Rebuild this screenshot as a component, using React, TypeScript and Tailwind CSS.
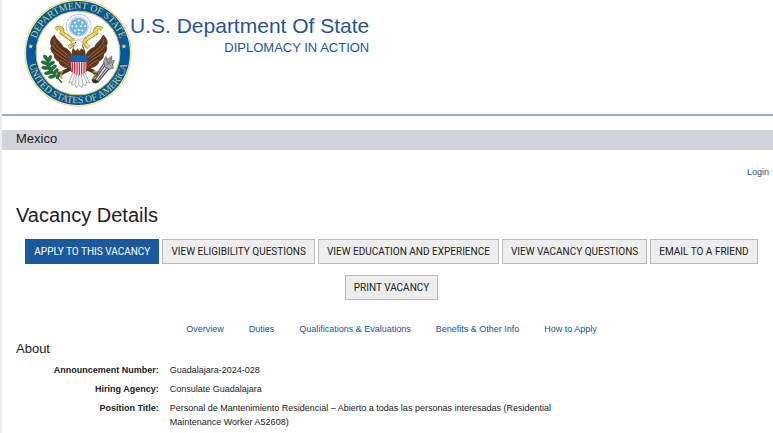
const actions = [
  { label: 'APPLY TO THIS VACANCY', primary: true },
  { label: 'VIEW ELIGIBILITY QUESTIONS' },
  { label: 'VIEW EDUCATION AND EXPERIENCE' },
  { label: 'VIEW VACANCY QUESTIONS' },
  { label: 'EMAIL TO A FRIEND' },
  { label: 'PRINT VACANCY' },
];

const sections = [
  { label: 'Overview', href: '#overview' },
  { label: 'Duties', href: '#duties' },
  { label: 'Qualifications & Evaluations', href: '#qualifications' },
  { label: 'Benefits & Other Info', href: '#benefits' },
  { label: 'How to Apply', href: '#apply' },
];

const details = [
  { term: 'Announcement Number:', value: 'Guadalajara-2024-028' },
  { term: 'Hiring Agency:', value: 'Consulate Guadalajara' },
  {
    term: 'Position Title:',
    value:
      'Personal de Mantenimiento Residencial – Abierto a todas las personas interesadas (Residential Maintenance Worker A52608)',
  },
];

// One wing, drawn on the left and mirrored for the right
const Wing = () => (
  <g>
    <path
      d="M164 106 C153 116 150 128 155 138 C151 149 157 158 163 162 C162 174 170 181 177 183 C179 195 190 201 199 202 L216 214 L217 168 C210 152 201 145 190 142 C184 126 171 124 164 106 Z"
      fill="#65391f"
      stroke="#3d2417"
      strokeWidth="2"
    />
    <path
      d="M162 117 C164 140 184 145 211 174 M158 135 C168 154 190 161 212 185 M164 156 C179 170 196 174 214 197 M180 180 C192 184 204 193 214 205"
      fill="none"
      stroke="#a77a4d"
      strokeWidth="2"
    />
    <path
      d="M168 126 C176 138 190 148 204 158 M160 148 C172 161 190 171 209 181 M172 170 C184 177 198 184 211 194"
      fill="none"
      stroke="#321d13"
      strokeWidth="2"
    />
  </g>
);

const Scroll = () => (
  <g>
    <path
      d="M168 88 C180 79 191 89 186 99 C197 107 208 113 217 121 C224 127 216 136 207 143"
      fill="none"
      stroke="#826d20"
      strokeWidth="12"
    />
    <path
      d="M168 88 C180 79 191 89 186 99 C197 107 208 113 217 121 C224 127 216 136 207 143"
      fill="none"
      stroke="#e9cf49"
      strokeWidth="9"
    />
    <path d="M176 88 L181 98 M195 105 L211 116 M214 132 L207 140" stroke="#fff3a2" strokeWidth="3" />
  </g>
);

const leaves = [
  [139, 174, 55],
  [150, 176, 110],
  [135, 188, 20],
  [155, 190, 150],
  [137, 203, 10],
  [161, 202, 145],
  [145, 218, -10],
  [168, 214, 130],
  [157, 229, -15],
  [175, 226, 110],
  [146, 196, 75],
  [153, 211, 60],
];

const Seal = () => (
  <svg
    viewBox="74 -1 320 320"
    role="img"
    aria-label="Seal of the U.S. Department of State"
    className="-mt-px size-[108px] shrink-0"
  >
    <defs>
      <path id="seal-top" d="M103 159 A131 131 0 0 1 365 159" />
      <path id="seal-bottom" d="M85 159 A149 149 0 0 0 383 159" />
    </defs>
    <circle cx="234" cy="159" r="159" fill="#dedb69" />
    <circle cx="234" cy="159" r="156" fill="#f8f8da" />
    <circle cx="234" cy="159" r="154" fill="#05589b" />
    <circle cx="234" cy="159" r="124" fill="#fff" stroke="#c9c86a" strokeWidth="3" />
    <g fontFamily="'Liberation Serif', serif" fontSize="29" fill="#d3d57c" textAnchor="middle">
      <text>
        <textPath href="#seal-top" startOffset="50%">
          DEPARTMENT OF STATE
        </textPath>
      </text>
      <text>
        <textPath href="#seal-bottom" startOffset="50%">
          UNITED STATES OF AMERICA
        </textPath>
      </text>
    </g>
    <path
      d="M94 132 l2 5 5 0 -4 4 2 5 -5 -3 -5 3 2 -5 -4 -4 5 0 Z M370 132 l2 5 5 0 -4 4 2 5 -5 -3 -5 3 2 -5 -4 -4 5 0 Z"
      fill="#f0df55"
    />

    <circle cx="236" cy="81" r="37" fill="#fff" stroke="#b9bec5" strokeWidth="3" strokeDasharray="9 2" />
    <circle cx="236" cy="81" r="29" fill="#deebf5" stroke="#a6bacb" strokeWidth="2" />
    <circle cx="236" cy="81" r="26" fill="#6db5e2" />
    <g fill="#fff">
      {[
        [236, 63], [225, 69], [247, 69], [217, 80], [229, 80], [243, 80],
        [255, 80], [225, 92], [236, 91], [247, 92], [236, 101],
      ].map(([x, y]) => (
        <circle key={`${x}-${y}`} cx={x} cy={y} r="3" />
      ))}
    </g>

    <Wing />
    <g transform="translate(473 0) scale(-1 1)">
      <Wing />
    </g>
    <Scroll />
    <g transform="translate(473 0) scale(-1 1)">
      <Scroll />
    </g>

    <path d="M218 170 C211 154 221 145 222 132 L248 132 C250 145 260 154 255 170 Z" fill="#65391f" />
    <path
      d="M221 146 L224 130 C218 130 214 135 211 137 C213 125 221 121 230 122 C244 119 250 128 246 139 L251 149 L243 146 L238 153 L233 146 L227 152 Z"
      fill="#fff"
      stroke="#b8b5ae"
      strokeWidth="2"
    />
    <path d="M221 128 C214 126 208 132 211 139 L223 134 Z" fill="#e1ad2f" />
    <circle cx="227" cy="128" r="2" fill="#2d241e" />

    <path
      d="M220 215 L207 247 L215 245 L216 255 L224 251 L229 262 L237 255 L245 262 L249 252 L257 256 L259 246 L269 248 L253 215 Z"
      fill="#f5f5f5"
      stroke="#8d8d8d"
      strokeWidth="2"
    />
    <path
      d="M225 221 L216 249 M230 223 L225 251 M236 223 L236 253 M243 223 L248 250 M249 221 L260 246"
      stroke="#999"
      strokeWidth="2"
    />

    <path d="M213 184 H260 V207 Q257 219 237 225 Q216 219 213 207 Z" fill="#fff" stroke="#8a3338" strokeWidth="1" />
    <path
      d="M217 184 V216 M224 184 V220 M231 184 V223 M238 184 V224 M245 184 V221 M252 184 V218 M258 184 V211"
      stroke="#d62c42"
      strokeWidth="4"
    />
    <path d="M212 166 Q224 169 236 164 Q249 169 261 166 V186 H212 Z" fill="#175ea6" />

    <path d="M213 205 L190 216 L180 223 M260 205 L279 213 L292 226" fill="none" stroke="#553019" strokeWidth="11" />
    <path
      d="M189 214 L167 216 M186 221 L174 230 M180 223 L187 236 M279 214 L303 216 M287 221 L277 235 M290 226 L302 232"
      stroke="#dda63b"
      strokeWidth="5"
    />
    <path d="M139 168 Q143 204 187 247" fill="none" stroke="#34662e" strokeWidth="4" />
    {leaves.map(([x, y, angle]) => (
      <ellipse
        key={`${x}-${y}`}
        cx={x}
        cy={y}
        rx="11"
        ry="5"
        transform={`rotate(${angle} ${x} ${y})`}
        fill="#23733d"
        stroke="#174e2b"
        strokeWidth="1"
      />
    ))}

    <path
      d="M279 247 L324 181 M286 248 L331 187 M293 245 L336 193 M276 242 L317 180"
      stroke="#57585a"
      strokeWidth="4"
    />
    <path d="M283 245 L329 182 M289 246 L335 188" stroke="#d1d3d3" strokeWidth="2" />
    <path
      d="M310 182 L317 169 L322 178 L334 168 L333 181 L342 182 L336 194 L339 204 L327 207 L314 201 Z"
      fill="#a9abac"
      stroke="#55585a"
      strokeWidth="2"
    />
    <path d="M317 174 L323 190 L333 173 M318 196 L333 185 L338 195" fill="none" stroke="#505253" strokeWidth="2" />
    <path d="M274 236 L289 239 L296 246 L285 249 L277 245 Z" fill="#35302a" />
  </svg>
);

const App = () => {
  return (
    <div className="min-h-screen border-l-2 border-[#ededed] bg-white font-['Liberation_Sans',Arial,sans-serif] text-[9px] leading-[14px] text-[#212121]">
      <header className="flex h-[116px] items-start border-b-2 border-[#94acd8] pl-[22px]">
        <Seal />
        <div className="-ml-0.5 pt-[14px] text-right text-[#1d5799]">
          <p className="text-[21px] leading-6">U.S. Department Of State</p>
          <p className="text-[13px] leading-5">DIPLOMACY IN ACTION</p>
        </div>
      </header>

      <div className="mt-[14px] bg-[#d0d3d9] px-[14px] pb-0.5 text-[13px] leading-[18px]">Mexico</div>

      <div className="flex justify-end px-1 pt-[15px]">
        <a href="#login" className="text-[#205493] hover:underline">
          Login
        </a>
      </div>

      <main className="px-[14px] pt-6">
        <h1 className="text-xl leading-6">Vacancy Details</h1>

        <div className="mt-3 -mr-2 flex flex-wrap justify-center gap-x-[3px] gap-y-[11px] font-[Roboto,sans-serif] text-[10px]">
          {actions.map((action) => (
            <button
              key={action.label}
              type="button"
              className={
                action.primary
                  ? 'h-[25px] border border-[#195a9f] bg-[#195a9f] px-2 text-white'
                  : 'h-[25px] border border-[#bbbbbb] bg-[#eeeeee] px-2 hover:bg-gray-200'
              }
            >
              {action.label}
            </button>
          ))}
        </div>

        <nav className="mt-[22px] -mr-2 flex flex-wrap justify-center gap-x-[25px]">
          {sections.map((section) => (
            <a key={section.href} href={section.href} className="text-[#205493] hover:underline">
              {section.label}
            </a>
          ))}
        </nav>

        <section>
          <h2 className="mt-1 text-[13px] leading-[18px]">About</h2>
          <dl className="mt-[5px] space-y-[5px]">
            {details.map((detail) => (
              <div key={detail.term} className="grid grid-cols-[39fr_161fr] gap-x-[11px]">
                <dt className="text-right font-bold">{detail.term}</dt>
                <dd className="max-w-[410px]">{detail.value}</dd>
              </div>
            ))}
          </dl>
        </section>
      </main>
    </div>
  );
};

export default App;
